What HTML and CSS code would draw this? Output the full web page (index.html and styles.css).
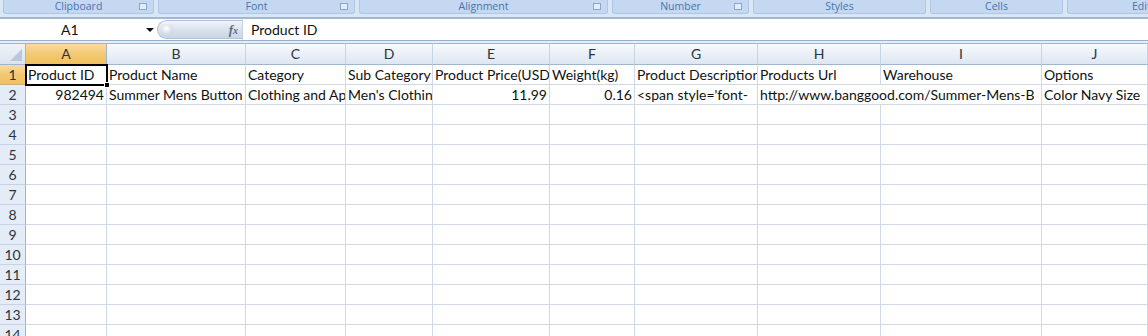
FILE: index.html
```html
<!DOCTYPE html>
<html>
<head>
<meta charset="utf-8">
<link rel="stylesheet" href="styles.css">
</head>
<body>
<div class="ribbon">
  <div class="group g-clip">Clipboard<span class="launcher"></span></div>
  <div class="group g-font">Font<span class="launcher"></span></div>
  <div class="group g-align">Alignment<span class="launcher"></span></div>
  <div class="group g-num">Number<span class="launcher"></span></div>
  <div class="group g-styles">Styles</div>
  <div class="group g-cells">Cells</div>
  <div class="group g-edit">Editing</div>
</div>
<div class="formula-bar">
  <div class="namebox"><span class="ref">A1</span><span class="arrow"></span></div>
  <div class="pill"><span class="knob"></span><span class="fx">f<span class="fx-x">x</span></span></div>
  <div class="formula">Product ID</div>
</div>
<div class="gap-strip"></div>
<div class="sheet">
  <div class="hdr corner"><svg width="14" height="14" viewBox="0 0 14 14"><polygon points="13,1 13,13 1,13" fill="#b9c8dc"/></svg></div>
  <div class="hdr col active">A</div>
  <div class="hdr col">B</div>
  <div class="hdr col">C</div>
  <div class="hdr col">D</div>
  <div class="hdr col">E</div>
  <div class="hdr col">F</div>
  <div class="hdr col">G</div>
  <div class="hdr col">H</div>
  <div class="hdr col">I</div>
  <div class="hdr col">J</div>
  <div class="hdr col"></div>

  <div class="hdr row active">1</div>
  <div class="cell selected">Product ID<span class="handle"></span></div>
  <div class="cell">Product Name</div>
  <div class="cell">Category</div>
  <div class="cell">Sub Category</div>
  <div class="cell">Product Price(USD)</div>
  <div class="cell">Weight(kg)</div>
  <div class="cell">Product Description</div>
  <div class="cell">Products Url</div>
  <div class="cell">Warehouse</div>
  <div class="cell">Options</div>
  <div class="cell"></div>

  <div class="hdr row">2</div>
  <div class="cell num">982494</div>
  <div class="cell">Summer Mens Button</div>
  <div class="cell">Clothing and Ap</div>
  <div class="cell">Men's Clothin</div>
  <div class="cell num">11.99</div>
  <div class="cell num">0.16</div>
  <div class="cell">&lt;span style='font-</div>
  <div class="cell span2">http://www.banggood.com/Summer-Mens-B</div>
  <div class="cell">Color Navy Size</div>
  <div class="cell"></div>
</div>
<script>
  // build empty rows 3-14
  const sheet = document.querySelector('.sheet');
  for (let r = 3; r <= 14; r++) {
    const h = document.createElement('div');
    h.className = 'hdr row';
    h.textContent = r;
    sheet.appendChild(h);
    for (let c = 0; c < 11; c++) {
      const d = document.createElement('div');
      d.className = 'cell';
      sheet.appendChild(d);
    }
  }
</script>
</body>
</html>
```

FILE: styles.css
```css
* { box-sizing: border-box; }
html, body { margin: 0; padding: 0; background: #ffffff; }
body {
  width: 1148px;
  height: 336px;
  overflow: hidden;
  font-family: Lato, "Liberation Sans", sans-serif;
}

/* Ribbon group labels */
.ribbon {
  display: flex;
  gap: 4px;
  height: 19px;
  padding-left: 3px;
  background: #d9e6f6;
  border-bottom: 2px solid #a3b8d3;
  overflow: hidden;
}
.group {
  position: relative;
  flex: none;
  height: 14px;
  background: #c4d8f1;
  border: 1px solid #b0c6e2;
  border-top: none;
  border-radius: 0 0 3px 3px;
  font-family: "Open Sans", "Noto Sans", sans-serif;
  font-size: 10.5px;
  line-height: 12px;
  color: #4a72ac;
  text-align: center;
  overflow: hidden;
  white-space: nowrap;
}
.g-clip { width: 151px; }
.g-font { width: 197px; }
.g-align { width: 249px; }
.g-num { width: 137px; }
.g-styles { width: 173px; }
.g-cells { width: 133px; }
.g-edit {
  flex: 1;
  text-align: left;
  padding-left: 64px;
  border-right: none;
  border-radius: 0 0 0 3px;
}
.launcher {
  position: absolute;
  right: 6px;
  top: 3px;
  width: 8px;
  height: 7px;
  border: 1px solid #8da5c6;
  background: #e3ecf7;
}

/* Formula bar */
.formula-bar {
  display: flex;
  height: 22px;
  background: #ffffff;
  border-bottom: 1px solid #9aaec7;
}
.namebox {
  position: relative;
  width: 157px;
  flex: none;
  font-size: 14px;
  line-height: 21px;
  color: #111;
}
.ref {
  position: absolute;
  left: 61px;
  top: 0;
}
.arrow {
  position: absolute;
  left: 146px;
  top: 9px;
  width: 0; height: 0;
  border-left: 4px solid transparent;
  border-right: 4px solid transparent;
  border-top: 4px solid #111;
}
.pill {
  position: relative;
  flex: none;
  width: 85px;
  height: 19px;
  margin-top: 1px;
  border: 1px solid #b4c2d4;
  border-right: none;
  border-radius: 10px 0 0 10px;
  background: linear-gradient(#f2f5fa, #d8e1ec 55%, #cbd6e4);
}
.knob {
  position: absolute;
  left: 4px;
  top: 3px;
  width: 11px;
  height: 11px;
  border-radius: 50%;
  background: radial-gradient(circle at 40% 40%, #ffffff, #cfd9e5 70%, #b8c5d6);
}
.fx {
  position: absolute;
  right: 4px;
  top: 0;
  font-family: "Liberation Serif", "DejaVu Serif", serif;
  font-style: italic;
  font-weight: bold;
  font-size: 13px;
  line-height: 17px;
  color: #5a6e88;
}
.fx-x { font-size: 10px; }
.formula {
  flex: 1;
  padding-left: 8px;
  font-size: 14px;
  line-height: 21px;
  color: #111;
  border-left: 1px solid #c5d1de;
}
.gap-strip {
  height: 2px;
  background: #e6edf6;
}

/* Sheet grid */
.sheet {
  display: grid;
  grid-template-columns: 26px 81px 139px 100px 87px 117px 85px 123px 123px 161px 106px 1fr;
  grid-auto-rows: 20px;
  grid-template-rows: 22px;
  font-size: 14px;
}
.hdr {
  color: #2b3440;
  border-right: 1px solid #9eb6ce;
  border-bottom: 1px solid #9eb6ce;
  text-align: center;
  overflow: hidden;
  white-space: nowrap;
}
.hdr.col {
  border-top: 1px solid #9eb6ce;
  line-height: 20px;
  background: linear-gradient(#f8fafd, #eaf0f8 50%, #dde6f2);
  border-right-color: #c5d3e3;
}
.hdr.row {
  line-height: 20px;
  background: #e4ecf7;
  border-bottom-color: #c5d3e3;
}
.hdr.corner {
  border-top: 1px solid #9eb6ce;
  background: linear-gradient(#eef3f9, #dbe4ef);
  display: flex;
  align-items: flex-end;
  justify-content: flex-end;
  padding: 0 2px 2px 0;
}
.hdr.active {
  background: linear-gradient(#f9dba3, #f3c872 50%, #f1c15f);
  border-right-color: #9eb6ce;
}
.hdr.row.active { border-bottom-color: #c5b080; }
.cell {
  position: relative;
  border-right: 1px solid #d0d7e5;
  border-bottom: 1px solid #d0d7e5;
  padding: 0 2px;
  line-height: 20px;
  color: #111;
  white-space: nowrap;
  overflow: hidden;
}
.cell.num { text-align: right; }
.cell.span2 { grid-column: span 2; }
.cell.selected {
  overflow: visible;
  outline: 2px solid #000;
  outline-offset: -1px;
  z-index: 1;
}
.handle {
  position: absolute;
  right: -4px;
  bottom: -4px;
  width: 6px;
  height: 6px;
  background: #000;
  border: 1px solid #fff;
}
```
